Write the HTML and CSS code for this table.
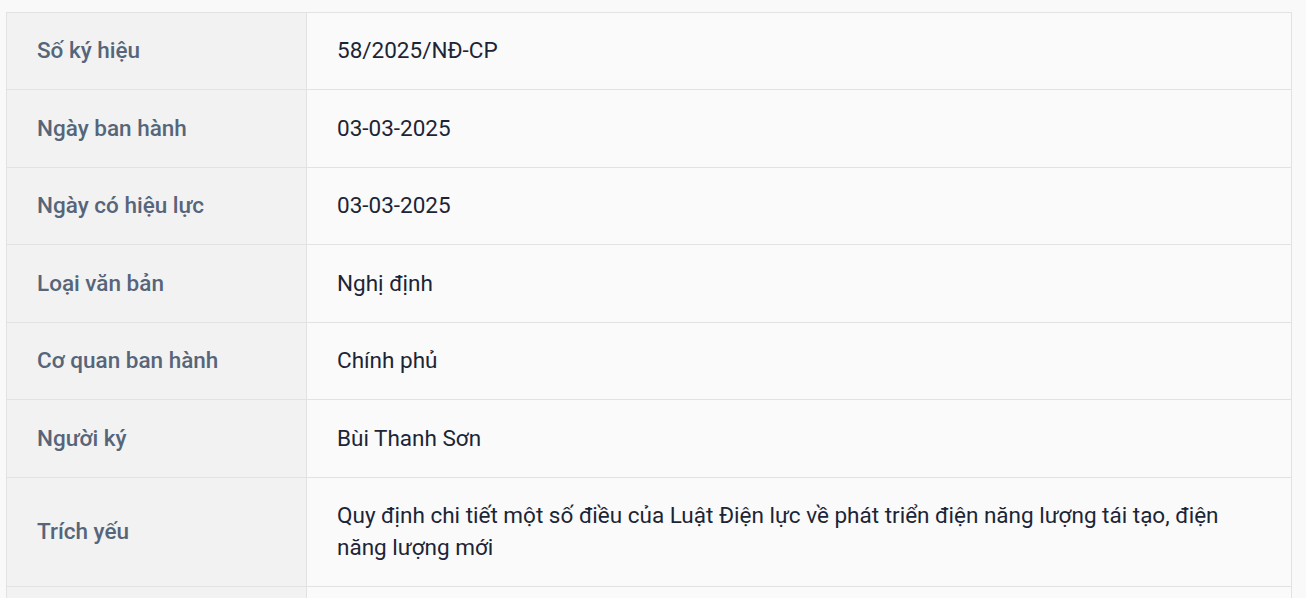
FILE: index.html
```html
<!DOCTYPE html>
<html lang="vi">
<head>
<meta charset="utf-8">
<title>Thông tin văn bản</title>
<link rel="stylesheet" href="styles.css">
</head>
<body>
<div class="page">
  <table class="info">
    <tbody>
      <tr><th>Số ký hiệu</th><td>58/2025/NĐ-CP</td></tr>
      <tr><th>Ngày ban hành</th><td>03-03-2025</td></tr>
      <tr><th>Ngày có hiệu lực</th><td>03-03-2025</td></tr>
      <tr><th>Loại văn bản</th><td>Nghị định</td></tr>
      <tr><th>Cơ quan ban hành</th><td>Chính phủ</td></tr>
      <tr><th>Người ký</th><td>Bùi Thanh Sơn</td></tr>
      <tr><th>Trích yếu</th><td>Quy định chi tiết một số điều của Luật Điện lực về phát triển điện năng lượng tái tạo, điện năng lượng mới</td></tr>
      <tr class="more"><th>&nbsp;</th><td>&nbsp;</td></tr>
    </tbody>
  </table>
</div>
</body>
</html>
```

FILE: styles.css
```css
html, body {
  margin: 0;
  padding: 0;
  background: #f9f9f9;
}

body {
  font-family: Roboto, "Noto Sans", sans-serif;
  font-size: 22.5px;
  overflow: hidden;
}

.page {
  padding: 11.5px 14px 0 6px;
}

.info {
  width: 1286px;
  border-collapse: collapse;
  table-layout: fixed;
}

.info th,
.info td {
  border: 1px solid #e2e2e2;
  padding: 22.5px 30px;
  line-height: 31.5px;
  text-align: left;
  vertical-align: middle;
}

.info th {
  width: 239px;
  background: #f2f2f2;
  color: #566579;
  font-weight: 500;
}

.info td {
  background: #fafafa;
  color: #1c2536;
  font-weight: 400;
}
```
